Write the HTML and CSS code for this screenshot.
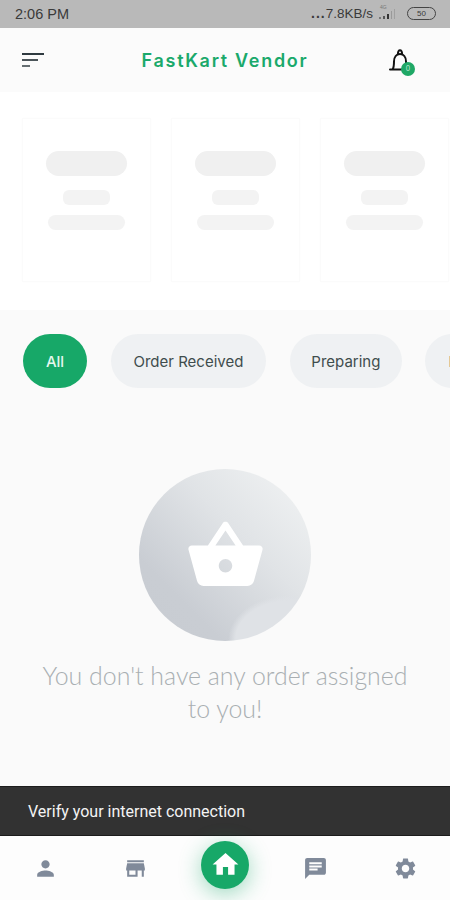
FILE: index.html
```html
<!DOCTYPE html>
<html lang="en">
<head>
  <meta charset="UTF-8">
  <title>FastKart Vendor</title>
  <meta name="viewport" content="width=device-width, initial-scale=1.0">
  <link rel="stylesheet" href="styles.css">
</head>
<body>
  <div class="status-bar">
    <span class="time">2:06 PM</span>
    <div class="status-right">
      <span class="dots">...</span><span>7.8KB/s</span>
      <div class="signal">
        <span class="net-type">4G</span>
        <svg width="22" height="14" viewBox="0 0 22 14">
          <rect x="1" y="10" width="2" height="2" fill="#777"/>
          <rect x="5" y="9" width="2" height="3" fill="#555"/>
          <rect x="9" y="7" width="2" height="5" fill="#333"/>
          <rect x="13" y="4" width="1" height="8" fill="#999"/>
          <rect x="16" y="2" width="1" height="10" fill="#a0a0a0"/>
        </svg>
      </div>
      <div class="battery">50</div>
    </div>
  </div>

  <header class="app-header">
    <div class="menu-icon"><i></i><i></i><i></i></div>
    <h1>FastKart Vendor</h1>
    <div class="bell">
      <svg width="24" height="27" viewBox="0 0 24 27" fill="none" stroke="#111" stroke-width="2">
        <path d="M2 22.500h20M4.500 22.500c1.500-2 1.500-4 1.500-8 0-4.500 2.500-7.500 6-7.500s6 3 6 7.500c0 4 0 6 1.500 8" stroke-linecap="round"/>
        <path d="M10 7c-.5-5 4.500-5 4 0"/>
      </svg>
      <span class="badge">0</span>
    </div>
  </header>

  <section class="stats">
    <div class="stat-card"><i class="line-a"></i><i class="line-b"></i><i class="line-c"></i></div>
    <div class="stat-card"><i class="line-a"></i><i class="line-b"></i><i class="line-c"></i></div>
    <div class="stat-card"><i class="line-a"></i><i class="line-b"></i><i class="line-c"></i></div>
  </section>

  <main class="orders">
    <div class="filters">
      <button class="chip active">All</button>
      <button class="chip">Order Received</button>
      <button class="chip">Preparing</button>
      <button class="chip">Ready</button>
    </div>
    <div class="empty">
      <div class="empty-circle">
        <svg width="81" height="81" viewBox="0 0 24 24" fill="#fff">
          <path d="M17.210 9l-4.380-6.560c-.19-.28-.51-.42-.83-.42-.32 0-.64.14-.83.43L6.790 9H2c-.55 0-1 .45-1 1 0 .09.01.18.04.27l2.540 9.270c.23.84 1 1.460 1.920 1.460h13c.92 0 1.690-.62 1.930-1.460l2.540-9.270L23 10c0-.55-.45-1-1-1h-4.790zM9 9l3-4.400L15 9H9zm3 8c-1.100 0-2-.9-2-2s.9-2 2-2 2 .9 2 2-.9 2-2 2z" fill-rule="evenodd"/>
        </svg>
      </div>
      <p>You don't have any order assigned to you!</p>
    </div>
  </main>

  <div class="snackbar">Verify your internet connection</div>

  <nav class="bottom-nav">
    <svg class="nav-icon" viewBox="0 0 24 24"><path d="M12 12c2.210 0 4-1.790 4-4s-1.790-4-4-4-4 1.790-4 4 1.790 4 4 4zm0 2c-2.670 0-8 1.340-8 4v2h16v-2c0-2.660-5.330-4-8-4z"/></svg>
    <svg class="nav-icon" viewBox="0 0 24 24"><path d="M20 4H4v2h16V4zm1 10v-2l-1-5H4l-1 5v2h1v6h10v-6h4v6h2v-6h1zm-9 4H6v-4h6v4z"/></svg>
    <div class="home-btn">
      <svg width="31" height="31" viewBox="0 0 24 24" fill="#fff"><path d="M10 20v-6h4v6h5v-8h3L12 3 2 12h3v8z"/></svg>
    </div>
    <svg class="nav-icon" viewBox="0 0 24 24"><path d="M20 2H4c-1.100 0-1.990.9-1.990 2L2 22l4-4h14c1.100 0 2-.9 2-2V4c0-1.100-.9-2-2-2zM6 9h12v2H6V9zm8 5H6v-2h8v2zm4-6H6V6h12v2z"/></svg>
    <svg class="nav-icon" viewBox="0 0 24 24"><path d="M19.140 12.940c.04-.3.06-.61.06-.94 0-.32-.02-.64-.07-.94l2.030-1.580c.18-.14.23-.41.12-.61l-1.920-3.320c-.12-.22-.37-.29-.59-.22l-2.390.96c-.5-.38-1.030-.7-1.620-.94l-.36-2.540c-.04-.24-.24-.41-.48-.41h-3.840c-.24 0-.43.17-.47.41l-.36 2.540c-.59.24-1.130.57-1.620.94l-2.390-.96c-.22-.08-.47 0-.59.22L2.740 8.870c-.12.21-.08.47.12.61l2.030 1.580c-.05.3-.09.63-.09.94s.02.64.07.94l-2.030 1.580c-.18.14-.23.41-.12.61l1.920 3.320c.12.22.37.29.59.22l2.390-.96c.5.38 1.030.7 1.620.94l.36 2.540c.05.24.24.41.48.41h3.840c.24 0 .44-.17.47-.41l.36-2.540c.59-.24 1.130-.56 1.620-.94l2.390.96c.22.08.47 0 .59-.22l1.920-3.320c.12-.22.07-.47-.12-.61l-2.010-1.580zM12 15.600c-1.980 0-3.600-1.620-3.600-3.600s1.620-3.600 3.600-3.600 3.600 1.620 3.600 3.600-1.620 3.600-3.600 3.600z"/></svg>
  </nav>
</body>
</html>
```

FILE: styles.css
```css
* {
  box-sizing: border-box;
}

body {
  margin: 0;
  width: 450px;
  height: 900px;
  overflow: hidden;
  display: flex;
  flex-direction: column;
  background: #fafafa;
  font-family: "Inter", "Liberation Sans", sans-serif;
}

.status-bar {
  height: 28px;
  flex: none;
  display: flex;
  align-items: center;
  justify-content: space-between;
  padding: 0 14px 1px 15px;
  background: #b9b9b9;
  color: #3a3a3a;
  font-family: "Liberation Sans", sans-serif;
  font-size: 13.500px;
}

.time {
  font-size: 14.500px;
}

.status-right {
  display: flex;
  align-items: center;
}

.dots {
  font-size: 14px;
  font-weight: bold;
  letter-spacing: 1px;
  position: relative;
  top: -1px;
}

.signal {
  position: relative;
  margin: 0 7px 0 5px;
}

.signal svg {
  display: block;
}

.net-type {
  position: absolute;
  left: 2px;
  top: -3px;
  color: #777;
  font-size: 5px;
}

.battery {
  width: 29px;
  height: 13px;
  border: 1px solid #444;
  border-radius: 7px;
  font-size: 8px;
  line-height: 11px;
  text-align: center;
}

.app-header {
  height: 64px;
  flex: none;
  display: grid;
  grid-template-columns: 1fr auto 1fr;
  align-items: center;
  padding: 0 38px 0 22px;
  background: #fbfbfb;
}

.app-header h1 {
  margin: 0 0 0 16px;
  color: #1aa96b;
  font-size: 18px;
  font-weight: 600;
  letter-spacing: 1.700px;
}

.menu-icon {
  width: 22px;
  display: flex;
  flex-direction: column;
  gap: 4px;
}

.menu-icon i {
  height: 2px;
  background: #2f3a40;
}

.menu-icon i:nth-child(2) {
  width: 16px;
  background: #4b5459;
}

.menu-icon i:nth-child(3) {
  width: 8px;
  background: #666e72;
}

.bell {
  position: relative;
  justify-self: end;
  width: 24px;
  height: 27px;
}

.badge {
  position: absolute;
  right: -3px;
  bottom: -2px;
  width: 14px;
  height: 14px;
  border-radius: 50%;
  background: #1fa866;
  color: #bfe8d4;
  font-size: 7px;
  line-height: 14px;
  text-align: center;
}

.stats {
  height: 218px;
  flex: none;
  display: flex;
  gap: 20px;
  padding: 26px 0 0 22px;
  background: #fff;
  overflow: hidden;
}

.stat-card {
  width: 129px;
  height: 164px;
  flex: none;
  display: flex;
  flex-direction: column;
  align-items: center;
  padding-top: 32px;
  border: 1px solid #fbfbfb;
  box-shadow: 0 0 3px #fcfcfc;
}

.stat-card i {
  display: block;
  background: #f3f3f3;
}

.stat-card .line-a {
  background: #f0f0f0;
}

.line-a {
  width: 81px;
  height: 25px;
  border-radius: 13px;
}

.line-b {
  width: 47px;
  height: 15px;
  margin-top: 14px;
  border-radius: 6px;
}

.line-c {
  width: 77px;
  height: 15px;
  margin-top: 10px;
  border-radius: 8px;
}

.orders {
  flex: 1;
  min-height: 0;
  overflow: hidden;
}

.filters {
  display: flex;
  gap: 23.500px;
  padding: 24px 0 0 23px;
}

.chip {
  height: 54px;
  flex: none;
  padding: 0 23px;
  border: none;
  border-radius: 27px;
  background: #eff1f3;
  color: #3f4d4d;
  font-family: inherit;
  font-size: 15px;
}

.chip:nth-child(3) {
  padding: 0 21.500px;
}

.chip.active {
  width: 64px;
  padding: 0;
  background: #17a868;
  color: #e6f7ef;
  font-weight: 500;
}

.empty {
  display: flex;
  flex-direction: column;
  align-items: center;
  padding-top: 81px;
}

.empty-circle {
  width: 172px;
  height: 172px;
  display: flex;
  align-items: center;
  justify-content: center;
  border-radius: 50%;
  background:
    radial-gradient(ellipse 62px 44px at 88% 99%, #dfe2e6 0, #dfe2e6 88%, transparent 100%),
    linear-gradient(225deg, #eff1f2 8%, #e0e3e6 40%, #c9cdd3 76%, #c8ccd2 100%);
}

.empty p {
  width: 380px;
  margin: 18px 0 0;
  color: #a9afb2;
  font-family: "Lato", sans-serif;
  font-size: 24.900px;
  font-weight: 300;
  line-height: 33px;
  text-align: center;
}

.snackbar {
  height: 50px;
  flex: none;
  display: flex;
  align-items: center;
  padding-left: 28px;
  border-top: 1px solid #1c1c1c;
  border-bottom: 1px solid #1c1c1c;
  background: #323232;
  color: #f4f4f4;
  font-family: "Roboto", sans-serif;
  font-size: 16px;
}

.bottom-nav {
  height: 64px;
  flex: none;
  display: grid;
  grid-template-columns: repeat(5, 90px);
  align-items: center;
  justify-items: center;
  background: #fdfdfd;
}

.nav-icon {
  width: 25px;
  height: 25px;
  fill: #808a9a;
}

.home-btn {
  width: 48px;
  height: 48px;
  display: flex;
  align-items: center;
  justify-content: center;
  margin-top: -7px;
  border-radius: 50%;
  background: #17a868;
  box-shadow: 0 5px 22px rgba(23, 168, 104, 0.42);
}
```
